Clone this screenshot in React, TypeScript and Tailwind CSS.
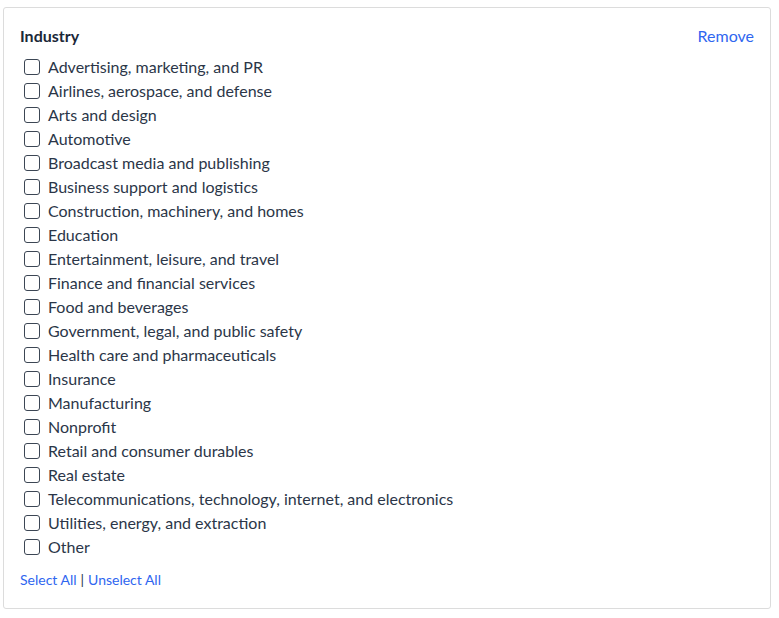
const industries = [
  "Advertising, marketing, and PR",
  "Airlines, aerospace, and defense",
  "Arts and design",
  "Automotive",
  "Broadcast media and publishing",
  "Business support and logistics",
  "Construction, machinery, and homes",
  "Education",
  "Entertainment, leisure, and travel",
  "Finance and financial services",
  "Food and beverages",
  "Government, legal, and public safety",
  "Health care and pharmaceuticals",
  "Insurance",
  "Manufacturing",
  "Nonprofit",
  "Retail and consumer durables",
  "Real estate",
  "Telecommunications, technology, internet, and electronics",
  "Utilities, energy, and extraction",
  "Other",
];

export default function App() {
  return (
    <div className="min-h-screen bg-white pl-[3px] pt-[7px] font-['Lato','Liberation_Sans',sans-serif]">
      <div className="w-[768px] h-[602px] rounded-[3px] border border-[#dcdcdc] pl-4 pr-[16px] pt-[18px]">
        <div className="flex items-center justify-between">
          <h2 className="text-[16px] leading-[20px] font-bold text-[#1b2838]">Industry</h2>
          <button className="text-[16px] leading-[20px] text-[#2f66f0]">Remove</button>
        </div>

        <ul className="mt-[9px] pl-1">
          {industries.map((name) => (
            <li key={name} className="flex h-6 items-center gap-2">
              <span className="h-4 w-4 rounded-[3px] border border-[#3c4654] bg-white" />
              <span className="text-[16px] leading-6 text-[#2b3648]">{name}</span>
            </li>
          ))}
        </ul>

        <div className="mt-[13px] flex items-center gap-1 text-[14px] leading-4">
          <a href="#" className="text-[#2f66f0]">Select All</a>
          <span className="text-[#2b3648]">|</span>
          <a href="#" className="text-[#2f66f0]">Unselect All</a>
        </div>
      </div>
    </div>
  );
}
